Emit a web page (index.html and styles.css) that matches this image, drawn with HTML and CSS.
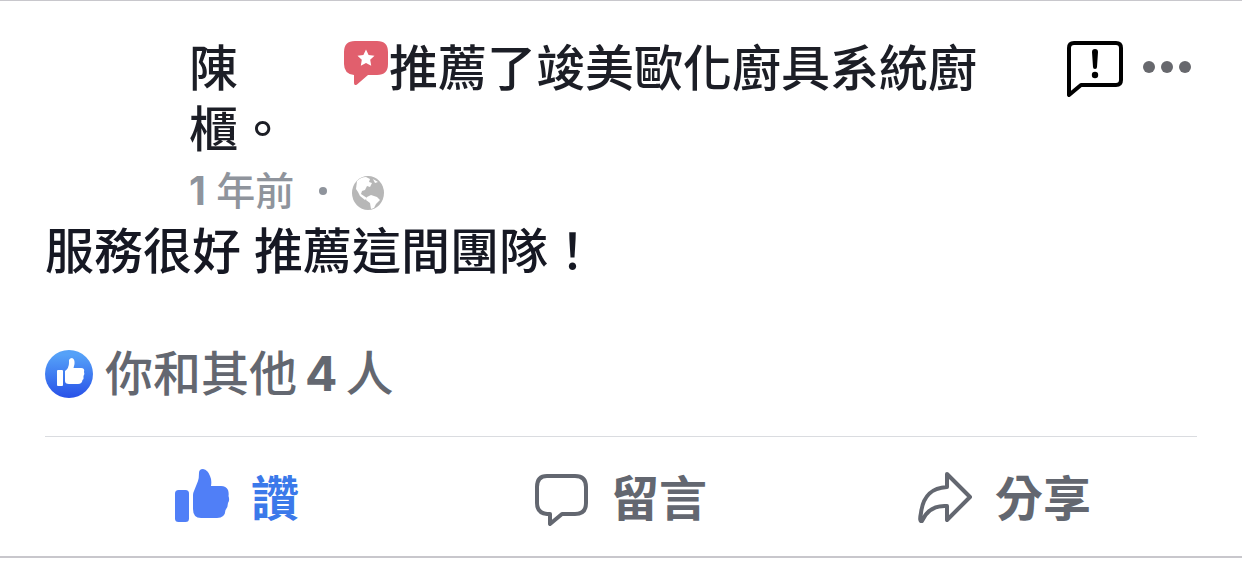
FILE: index.html
```html
<!DOCTYPE html>
<html lang="zh-Hant">
<head>
<meta charset="utf-8">
<meta name="viewport" content="width=device-width, initial-scale=1">
<title>推薦</title>
<link rel="stylesheet" href="styles.css">
</head>
<body>
<article class="post">
  <header class="header">
    <div class="heading">
      <h1 class="title"><span class="author">陳</span><svg class="badge" viewBox="0 1 44 44" aria-hidden="true"><path fill="#e15f6d" d="M11 0H33Q44 0 44 11V23Q44 34 33 34H24L13 43.500Q10 45 10 42V34Q0 33 0 23V11Q0 0 11 0Z"/><path fill="#fff" d="M22 8.500l2.600 5.400 5.900.8-4.300 4.100 1 5.900-5.200-2.800-5.200 2.800 1-5.900-4.300-4.100 5.900-.8Z"/></svg>推薦了竣美歐化廚具系統廚櫃。</h1>
      <p class="meta"><span><span class="number">1</span> 年前</span><span class="dot"></span><svg class="globe" viewBox="0 -2 32 34" role="img" aria-label="公開"><ellipse cx="16" cy="17" rx="16" ry="17" fill="#b7b7b7"/><path fill="#fff" d="M5 5Q9 1 14 1L18 3L17 6L20 7L18 11L15 10L13 14L10 15L9 18L12 20L15 22L13 24L8 20L6 16L4 13ZM15 21L19 19L25 21L28 24L24 28L22 32L19 33L18 27L14 24ZM21 3L26 6L23 7Z"/></svg></p>
    </div>
    <div class="tools">
      <button class="icon-button" type="button" aria-label="提供意見"><svg class="report" viewBox="0 0 56 56" aria-hidden="true"><path fill="none" stroke="#000" stroke-width="4" stroke-linejoin="round" d="M7 2H49Q54 2 54 7V39Q54 44 49 44H14L2 54V7Q2 2 7 2Z"/><path d="M25 11Q25 8 28 8T31 11L30 26Q30 28 28 28T26 26Z"/><circle cx="28" cy="34" r="3.200"/></svg></button>
      <button class="icon-button" type="button" aria-label="更多"><svg class="more" viewBox="0 2 48 12" fill="#67686d" aria-hidden="true"><circle cx="6" cy="6" r="6"/><circle cx="24" cy="6" r="6"/><circle cx="42" cy="6" r="6"/></svg></button>
    </div>
  </header>
  <p class="message">服務很好 推薦這間團隊！</p>
  <div class="reactions">
    <svg class="reaction" viewBox="0 0 48 48" aria-hidden="true"><defs><linearGradient id="blue" x2="0" y2="1"><stop offset=".1" stop-color="#55a1f8"/><stop offset="1" stop-color="#2851e8"/></linearGradient></defs><circle cx="24" cy="24" r="24" fill="url(#blue)"/><g fill="#fff"><rect x="12" y="20" width="6" height="16" rx="1"/><path d="M20 21Q24 18 24 13V10Q25 8 27 8Q30 9 29.500 14L28.500 18H36Q40 18 39 22Q40 24 38.500 26Q39 29 37.500 30Q37 34 33 34H24Q20 34 20 31Z"/></g></svg>
    <span>你和其他<span class="number count">4</span>人</span>
  </div>
  <div class="actions">
    <button class="action liked" type="button"><svg class="action-icon" viewBox="0 3 54 54" fill="#507ff7" aria-hidden="true"><rect y="21" width="14" height="32" rx="3.500"/><path d="M18 26Q18 24 19 22L23 12Q24 9 24 4Q24 0 28 0Q33 1 35 7Q37 11 36 17H46Q51 17 53 21Q54 24 53.500 27Q55 31 53 34Q53 38 50.500 41Q50 49 42 49H26Q18 49 18 40Z"/></svg>讚</button>
    <button class="action" type="button"><svg class="action-icon" viewBox="0 2 54 54" fill="none" stroke="#636770" stroke-width="4" stroke-linejoin="round" aria-hidden="true"><path d="M12 6H40Q51 6 51 17V33Q51 44 40 44H27L15 54V44H12Q2 43 2 33V17Q2 6 12 6Z"/></svg>留言</button>
    <button class="action" type="button"><svg class="action-icon" viewBox="0 2 54 54" fill="none" stroke="#636770" stroke-width="4" stroke-linejoin="round" aria-hidden="true"><path d="M28 4L51 27L28 50V36C14 35 7 42 3 51Q0 52 2 43C4 26 12 18 28 17Z"/></svg>分享</button>
  </div>
</article>
</body>
</html>
```
FILE: styles.css
```css
* {
  box-sizing: border-box;
}

body {
  margin: 0;
  background: #fff;
  color: #1c1e26;
  font-family: Inter, "Noto Sans CJK TC", sans-serif;
  font-size: 49px;
  font-weight: 500;
  line-height: 61px;
}

.post {
  padding: 37px 45px 0;
  border-top: 1px solid #c8c7cc;
  border-bottom: 2px solid #c8c7cc;
}

.header {
  display: flex;
  gap: 60px;
  padding-left: 144px;
}

.heading {
  flex: 1;
}

.title,
.meta,
.message {
  margin: 0;
  font-weight: 500;
}

.title {
  font-size: 49px;
}

.author {
  margin-right: 106px;
}

.badge {
  width: 44px;
  height: 44px;
  margin-right: 1px;
  overflow: visible;
}

.meta {
  display: flex;
  align-items: center;
  color: #8f949c;
  font-size: 39px;
}

.number {
  font-weight: 700;
}

.dot {
  width: 8px;
  height: 8px;
  margin: 0 25px;
  border-radius: 50%;
  background: #8f949c;
}

.globe {
  width: 32px;
  height: 34px;
  overflow: visible;
}

.tools {
  display: flex;
  align-items: flex-start;
  gap: 20px;
  padding-right: 6px;
}

.icon-button {
  display: flex;
  align-items: center;
  height: 61px;
  padding: 0;
  border: 0;
  background: none;
}

.report {
  width: 56px;
  height: 56px;
}

.more {
  width: 48px;
  height: 12px;
  overflow: visible;
}

.message {
  color: #161823;
}

.reactions {
  display: flex;
  align-items: center;
  gap: 12px;
  padding: 61px 0 32px;
  border-bottom: 1px solid #dadce0;
  color: #636770;
  font-size: 48px;
}

.reaction {
  width: 48px;
  height: 48px;
}

.count {
  margin: 0 8px;
}

.actions {
  display: grid;
  grid-template-columns: repeat(3, 1fr);
}

.action {
  display: flex;
  align-items: center;
  justify-content: center;
  gap: 22px;
  height: 119px;
  padding: 4px 0 0;
  border: 0;
  background: none;
  color: #636770;
  font: inherit;
  font-size: 48px;
  font-weight: 700;
}

.action-icon {
  width: 54px;
  height: 54px;
  overflow: visible;
}

.liked {
  color: #3b79ea;
}
```
